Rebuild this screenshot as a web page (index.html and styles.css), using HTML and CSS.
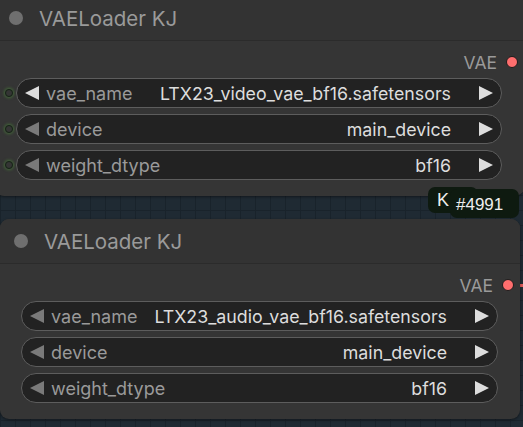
FILE: index.html
```html
<!DOCTYPE html>
<html>
<head>
<meta charset="utf-8">
<link rel="stylesheet" href="styles.css">
</head>
<body>
<div class="canvas">
  <div class="node node-a">
    <div class="node-header">
      <span class="title-dot"></span>
      <span class="title">VAELoader KJ</span>
    </div>
    <div class="node-body">
      <div class="output-row"><span class="out-label">VAE</span><span class="out-dot"></span></div>
      <div class="widgets">
        <div class="widget">
          <span class="in-dot"></span>
          <svg class="arrow arrow-left bright" viewBox="0 0 14 14"><polygon points="14,0 14,14 0,7"/></svg>
          <span class="w-label">vae_name</span>
          <span class="w-value">LTX23_video_vae_bf16.safetensors</span>
          <svg class="arrow arrow-right" viewBox="0 0 14 14"><polygon points="0,0 0,14 14,7"/></svg>
        </div>
        <div class="widget">
          <span class="in-dot"></span>
          <svg class="arrow arrow-left" viewBox="0 0 14 14"><polygon points="14,0 14,14 0,7"/></svg>
          <span class="w-label">device</span>
          <span class="w-value">main_device</span>
          <svg class="arrow arrow-right" viewBox="0 0 14 14"><polygon points="0,0 0,14 14,7"/></svg>
        </div>
        <div class="widget">
          <span class="in-dot"></span>
          <svg class="arrow arrow-left" viewBox="0 0 14 14"><polygon points="14,0 14,14 0,7"/></svg>
          <span class="w-label">weight_dtype</span>
          <span class="w-value">bf16</span>
          <svg class="arrow arrow-right" viewBox="0 0 14 14"><polygon points="0,0 0,14 14,7"/></svg>
        </div>
      </div>
    </div>
  </div>

  <div class="link-wire"></div>

  <div class="node node-b">
    <div class="node-header">
      <span class="title-dot"></span>
      <span class="title">VAELoader KJ</span>
    </div>
    <div class="node-body">
      <div class="output-row"><span class="out-label">VAE</span><span class="out-dot"></span></div>
      <div class="widgets">
        <div class="widget">
          <svg class="arrow arrow-left" viewBox="0 0 14 14"><polygon points="14,0 14,14 0,7"/></svg>
          <span class="w-label">vae_name</span>
          <span class="w-value">LTX23_audio_vae_bf16.safetensors</span>
          <svg class="arrow arrow-right" viewBox="0 0 14 14"><polygon points="0,0 0,14 14,7"/></svg>
        </div>
        <div class="widget">
          <svg class="arrow arrow-left" viewBox="0 0 14 14"><polygon points="14,0 14,14 0,7"/></svg>
          <span class="w-label">device</span>
          <span class="w-value">main_device</span>
          <svg class="arrow arrow-right" viewBox="0 0 14 14"><polygon points="0,0 0,14 14,7"/></svg>
        </div>
        <div class="widget">
          <svg class="arrow arrow-left" viewBox="0 0 14 14"><polygon points="14,0 14,14 0,7"/></svg>
          <span class="w-label">weight_dtype</span>
          <span class="w-value">bf16</span>
          <svg class="arrow arrow-right" viewBox="0 0 14 14"><polygon points="0,0 0,14 14,7"/></svg>
        </div>
      </div>
    </div>
  </div>

  <div class="badge badge-k">K</div>
  <div class="badge badge-id">#4991</div>
</div>
</body>
</html>
```

FILE: styles.css
```css
html, body {
  margin: 0;
  padding: 0;
  width: 523px;
  height: 427px;
  overflow: hidden;
}

body {
  font-family: Inter, "Noto Sans", sans-serif;
}

.canvas {
  position: relative;
  width: 523px;
  height: 427px;
  overflow: hidden;
  background-color: #1f2a33;
  background-image:
    linear-gradient(to right, #19232b 1px, transparent 1px),
    linear-gradient(to bottom, #19232b 1px, transparent 1px);
  background-size: 15px 15px;
}

.node {
  position: absolute;
  height: 200px;
  box-sizing: border-box;
  background: #353535;
  border-radius: 9px;
  display: flex;
  flex-direction: column;
  box-shadow: 0 1px 3px rgba(0, 0, 0, 0.45);
}

.node-a {
  left: -5px;
  top: -4px;
  width: 529px;
}

.node-b {
  left: 0;
  top: 219px;
  width: 520px;
}

.node-header {
  height: 45px;
  box-sizing: border-box;
  border-bottom: 1px solid #2b2b2b;
  background: #333333;
  border-radius: 9px 9px 0 0;
  display: flex;
  align-items: center;
  padding-left: 14px;
}

.title-dot {
  width: 14px;
  height: 14px;
  border-radius: 50%;
  background: #6f6f6f;
  flex: none;
}

.title {
  margin-left: 16px;
  font-size: 20.5px;
  color: #9a9a9a;
}

.node-body {
  padding: 10px 22px 16px 21px;
  display: flex;
  flex-direction: column;
}

.output-row {
  height: 22px;
  display: flex;
  align-items: center;
  justify-content: flex-end;
  margin-right: -16px;
  margin-bottom: 5px;
}

.out-label {
  font-size: 17.5px;
  color: #9a9a9a;
}

.out-dot {
  width: 10px;
  height: 10px;
  border-radius: 50%;
  background: #ff6e6e;
  border: 1px solid #1c1c1c;
  margin-left: 9px;
}

.widgets {
  display: flex;
  flex-direction: column;
  gap: 6px;
}

.widget {
  position: relative;
  height: 30px;
  box-sizing: border-box;
  border: 1.5px solid #5d5d5d;
  border-radius: 15px;
  background: #222222;
  display: flex;
  align-items: center;
  padding: 0 8px 0 8px;
}

.in-dot {
  position: absolute;
  left: -12px;
  top: 50%;
  width: 6px;
  height: 6px;
  margin-top: -4.5px;
  border-radius: 50%;
  border: 1.5px solid #142514;
  box-shadow: 0 0 3px 1px rgba(80, 150, 60, 0.55);
}

.arrow {
  width: 14px;
  height: 14px;
  flex: none;
}

.arrow polygon {
  fill: #7a7a7a;
}

.arrow-left.bright polygon,
.arrow-right polygon {
  fill: #dddddd;
}

.w-label {
  margin-left: 7px;
  font-size: 18px;
  color: #9a9a9a;
  white-space: nowrap;
}

.w-value {
  margin-left: auto;
  margin-right: 28px;
  font-size: 17.8px;
  color: #dddddd;
  white-space: nowrap;
}

.link-wire {
  position: absolute;
  left: 518px;
  top: 284px;
  width: 8px;
  height: 3px;
  background: #e05a5a;
}

.badge {
  position: absolute;
  background: #0e1a10;
  color: #eeeeee;
  font-family: "Liberation Sans", Arial, sans-serif;
  border-radius: 7px;
  display: flex;
  align-items: center;
}

.badge-k {
  left: 428px;
  top: 187px;
  width: 50px;
  height: 26px;
  padding-left: 9px;
  box-sizing: border-box;
  font-size: 18px;
  align-items: flex-start;
  padding-top: 3px;
}

.badge-id {
  left: 450px;
  top: 189px;
  width: 69px;
  height: 29px;
  padding-left: 6px;
  box-sizing: border-box;
  font-size: 17px;
  padding-top: 2px;
}
```
